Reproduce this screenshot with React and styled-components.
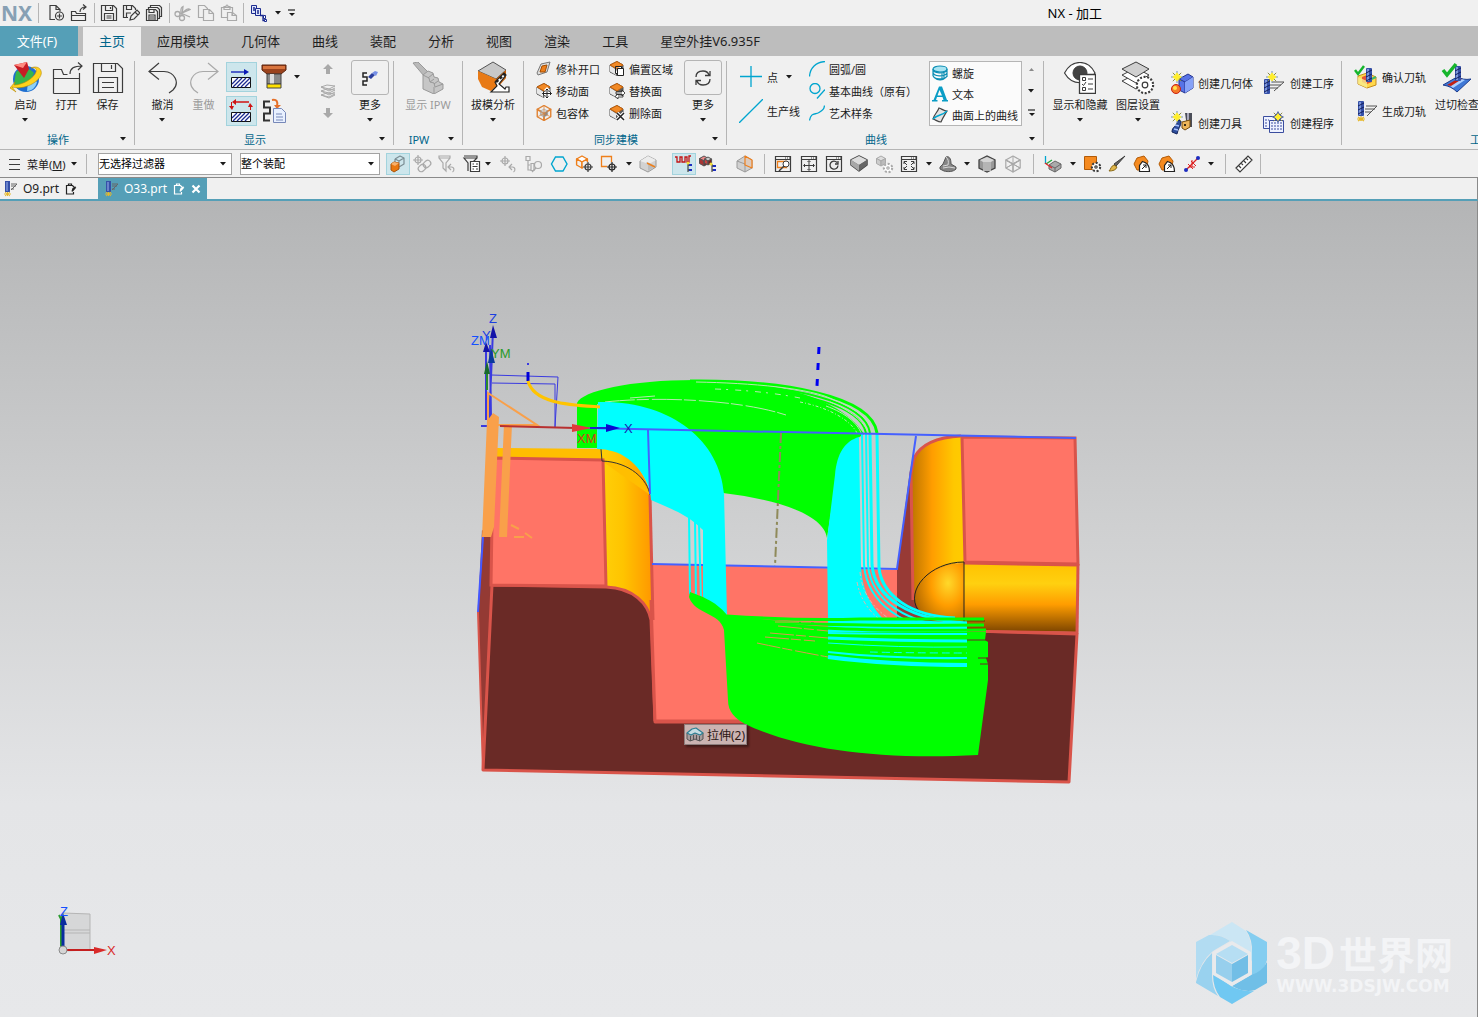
import { useState } from "react";
import styled, { createGlobalStyle } from "styled-components";

const DARK = "#3c3c3c";
const GREY = "#a9a9a9";
const BLUE = "#00a5cf";
const ORANGE = "#ee7f1b";

function Cube({ x, y, s, top, left, right, line = DARK, width = 1 }) {
    const w = s * 0.9;
    const h = s / 2;
    return (
        <g stroke={line} strokeWidth={width} strokeLinejoin="round">
            <path d={`M${x} ${y - s}l${w} ${h}l${-w} ${h}l${-w} ${-h}z`} fill={top} />
            <path d={`M${x - w} ${y - h}l${w} ${h}v${s}l${-w} ${-h}z`} fill={left} />
            <path d={`M${x + w} ${y - h}l${-w} ${h}v${s}l${w} ${-h}z`} fill={right} />
        </g>
    );
}

function Gear({ x, y, r = 4, color = DARK }) {
    return (
        <g stroke={color} fill="#fff">
            <circle cx={x} cy={y} r={r + 1} strokeDasharray="2 1.6" strokeWidth="2.4" />
            <circle cx={x} cy={y} r={r} stroke="none" />
            <circle cx={x} cy={y} r={r * 0.4} strokeWidth="1.2" />
        </g>
    );
}

function Star({ x, y, s = 6 }) {
    return (
        <g>
            <path d={`M${x - s} ${y}h${s * 2}M${x} ${y - s}v${s * 2}`} stroke="#6c8fc4" strokeWidth="1" />
            <path d={`M${x - s * 0.7} ${y - s * 0.7}L${x + s * 0.7} ${y + s * 0.7}M${x + s * 0.7} ${y - s * 0.7}L${x - s * 0.7} ${y + s * 0.7}`} stroke="#8a8a40" strokeWidth="1" />
            <path d={`M${x} ${y - s * 0.8}L${x + 2} ${y - 2}L${x + s * 0.8} ${y}L${x + 2} ${y + 2}L${x} ${y + s * 0.8}L${x - 2} ${y + 2}L${x - s * 0.8} ${y}L${x - 2} ${y - 2}z`} fill="#ffee2e" />
        </g>
    );
}

function Mill({ x, y, h = 15 }) {
    return (
        <g>
            <rect x={x} y={y} width="6" height={h} rx="1" fill="#3550a8" />
            <path d={`M${x + 2} ${y + 1}v${h - 2}`} stroke="#9db4ee" strokeWidth="1.4" />
            <path d={`M${x} ${y + 5}l6 -3M${x} ${y + 9}l6 -3M${x} ${y + 13}l6 -3`} stroke="#141f5c" />
        </g>
    );
}

function Target({ x, y, color = DARK, halo = "none" }) {
    const d = `M${x - 5} ${y}h10M${x} ${y - 5}v10`;
    return (
        <g fill="none">
            <path d={d} stroke={halo} strokeWidth="3" />
            <path d={d} stroke={color} strokeWidth="1.2" />
            <circle cx={x} cy={y} r="3" stroke={color} strokeWidth="1.2" />
        </g>
    );
}

const orangeCube = (
    <g strokeLinejoin="round">
        <path d="M1 4L8 .500l6 3.500v6L8 14.500 1 11z" fill="#5c5c5c" stroke="#555" />
        <path d="M1 4.500l6 4V14l-6-3.500z" fill="#e8e8e8" />
        <path d="M1 4L8 .500l6 3.500-6 4z" fill="#f28a26" stroke="#c2610c" />
    </g>
);
const frame = <path d="M4.500 4.500h15v15h-15zM4.500 7.500h15M14 6h1M16 6h1M18 6h1" stroke={DARK} fill="none" strokeWidth="1.2" />;

// every drawing is [width, height, shapes]
const drawings = {
    newFile: [18, 18, <g fill="none" stroke={DARK} strokeWidth="1.2"><path d="M7 15.500H2V1.500h6l4 4v2M8 1.500v4h4" /><circle cx="11.500" cy="12" r="4" /><path d="M9 12h5M11.500 9.500v5" /></g>],
    openFile: [18, 18, <g fill="none" stroke={DARK} strokeWidth="1.2"><path d="M1.500 16.500v-9h4l1 2h9v7zM1.500 11.500h14M10 8c0-4 2-5 6-5M13 .500l3 2.500-3 2.500" /></g>],
    save: [18, 18, <g fill="none" stroke={DARK} strokeWidth="1.200"><path d="M1.500 1.500h12l3 3v12h-15zM5.500 1.500v5h7v-5M10.500 3v2M4.500 16v-6.500h9V16M6.500 12h5M6.500 14h5" /></g>],
    saveEdit: [18, 18, <g fill="none" stroke={DARK} strokeWidth="1.200"><path d="M6 13.500H1.500v-12h9l3 3V6M4.500 1.500v4h5v-4M4.500 13V9H9" /><path d="M8 16l1-4 6-6 3 3-6 6zM13 8l3 3" fill="#f0f0f0" /></g>],
    saveAll: [18, 18, <g fill="none" stroke={DARK} strokeWidth="1.200"><path d="M1.500 5.500h9l2 2v9h-11zM4 5.500v3h5v-3M4 16v-5h6v5M5 13h4M5 15h4M3.500 5.500v-2h9l2 2v9h-2M5.500 3.500v-2h9l2 2v9h-2" /></g>],
    cut: [18, 18, <g fill="none" stroke={GREY} strokeWidth="1.300"><circle cx="3.500" cy="10" r="2.500" /><circle cx="8" cy="14" r="2.500" /><path d="M6 10l10-4.500c-2-2-5 1-8 4M8 11.500l1-9c-3 1-2 4-2 8M9 10l7 3" /></g>],
    copy: [18, 18, <g fill="#f0f0f0" stroke={GREY} strokeWidth="1.200"><path d="M1.500 1.500h6l3 3v9h-9z" /><path d="M6.500 5.500h6l4 4v7h-10zM12 5.500v4h4" /></g>],
    paste: [18, 18, <g fill="#f0f0f0" stroke={GREY} strokeWidth="1.200"><path d="M1.500 3.500h11v10h-11zM4 5.500v-3h2c0-2 2-2 2 0h2v3z" /><path d="M7.500 8.500h5l4 3v5h-9zM12 8.500v3h4" /></g>],
    routing: [18, 18, <g stroke="#1b2a90" fill="#dfe6fa"><path d="M1.500 1.500h5v8h-5z" /><path d="M5.500 4.500h5v7h-5z" /><path d="M3 4h2M3 6h2M7 7h2M7 9h2M10 11.500h3v5h2M13 13h2" fill="none" strokeWidth="1.300" /><path d="M13.500 11.500h2v3h-2zM14.500 15.500h2v2h-2z" fill="#fff" /></g>],

    start: [32, 32, <g><circle cx="16" cy="17" r="13" fill="#1f6fd0" /><path d="M6 10c6-5 14-4 18 1l-4 9c-4 2-6-2-8 3s-6 3-8-1z" fill="#39b54a" /><path d="M18 20c4-2 7-2 9 0-1 5-5 9-10 9z" fill="#8ed0f5" /><path d="M2 25c14 4 32-8 29-16-1-4-6-5-10-3 5-1 6 1 5 4-2 6-13 13-22 13l1-3-5 6 6 4z" fill="#ffd21c" stroke="#b98a00" strokeWidth=".600" /><path d="M4 3l13-3 2 7-5 9z" fill="#c81d25" /><path d="M4 3l13-3-4 6z" fill="#ff8a80" /></g>],
    open: [32, 32, <g fill="none" stroke={DARK} strokeWidth="1.200"><path d="M2.500 31.500v-24h8l2 5h4M28.500 11v20.500h-26M2.500 16.500h26" /><path d="M19 12c0-6 4-8 12-8M27 .500l4 3.500-4 4" /></g>],
    saveBig: [32, 32, <g fill="none" stroke={DARK} strokeWidth="1.200"><path d="M1.500 1.500h24l5 5v24h-29zM9.500 1.500v8h14v-8M19.500 3v4M6.500 30V15.500h19V30M10 20.500h12M10 25.500h12" /></g>],
    undo: [32, 32, <path d="M12 1L2 9.500l10 8M2.500 9.500H17C28 10 33 21 26 28l-4 3" fill="none" stroke={DARK} strokeWidth="1.200" />],
    redo: [32, 32, <path d="M20 1l10 8.500-10 8M29.500 9.500H15C4 10 -1 21 6 28l4 3" fill="none" stroke={GREY} strokeWidth="1.200" />],
    hatch: [24, 24, <g><path d="M2 7h15" stroke="#0a18b5" strokeWidth="1.300" /><path d="M15 4l5 3-5 3z" fill="#0a18b5" /><path d="M2.500 12.500h19v10h-19z" fill="#fff" stroke="#111" /><path d="M3 19l6-6M4 22l9-9M8 22l9-9M12 22l9-9M16 22l5-5" stroke="#1b2a90" strokeWidth="1.300" /></g>],
    hatchLoop: [24, 24, <g><path d="M6 3h14" stroke="#cf1313" strokeWidth="1.500" /><path d="M7 0L3 3l4 3zM0 7h5l-2 4zM19 8h5l-3-4z" fill="#cf1313" /><path d="M2.500 3v5M21.500 6v5" stroke="#cf1313" /><path d="M2.500 13.500h19v9h-19z" fill="#fff" stroke="#111" /><path d="M3 19l5-5M4 22l8-8M8 22l8-8M12 22l8-8M16 22l5-5" stroke="#1b2a90" strokeWidth="1.300" /></g>],
    toolHolder: [26, 26, <g><path d="M1 1h24v5l-5 4H6L1 6z" fill="#9b431d" stroke="#5a230c" /><path d="M2 2h22v3H2z" fill="#d8743e" /><path d="M6 10h14v10H6z" fill="#8a8a8a" stroke="#444" /><path d="M9 10h4v10H9z" fill="#ddd" /><path d="M6 20h14v4H6z" fill="#ffe100" stroke="#444" /></g>],
    pathDoc: [26, 26, <g fill="none"><path d="M9 3.500H3v6h6v6H3v7h6" stroke="#333" strokeWidth="2" /><path d="M11 2c5-1 6 2 5 6" stroke="#e5702a" strokeWidth="2" /><path d="M13 7h7l-4 4z" fill="#e5702a" /><path d="M12.500 10.500h8l4 4v10h-12z" fill="#e8f0ff" stroke="#7788b8" /><path d="M15 16h6M15 19h7M15 22h7" stroke="#7788b8" /></g>],
    upArrow: [14, 12, <path d="M7 1l5 5H9v5H5V6H2z" fill={GREY} />],
    downArrow: [14, 12, <path d="M7 11l5-5H9V1H5v5H2z" fill={GREY} />],
    layersGrey: [16, 16, <g fill="none" stroke={GREY} strokeLinejoin="round"><path d="M1 4l6-2 8 1-6 3zM1 8l6-2 8 1-6 3zM1 12l6-2 8 1-6 3zM1 4l8 4 6-3M1 8l8 4 6-3M1 12l8 3 6-3" /></g>],
    torch: [18, 18, <g fill="none"><path d="M6 4H2v4h4v4H2v4h4" stroke="#222" strokeWidth="1.500" /><path d="M7 8l4-4 3 2-4 4z" fill="#2c3f9e" /><path d="M11 4l3-2 3 1-2 4z" fill="#7690e6" /></g>],
    ipw: [32, 32, <g fill="#b9b9b9" stroke="#999"><path d="M1 1l5-1 10 10-4 4z" /><path d="M11 13l5-4 5 2 1 4 4 1 1 4 4 2v5l-9 5-11-5z" fill="#c6c6c6" /><path d="M11 13l6 3 1 4 4 1 1 4 8-3M22 32v-7M16 16l5-4M18 20l4-3M22 22l4-3" fill="none" /></g>],
    draft: [34, 34, <g><path d="M2 10l15-9 13 8-10 9z" fill="#c8c8c8" stroke="#555" /><path d="M2 10l18 8 2 6-7 6-9-4-4-8z" fill="#e87a16" /><path d="M30 9l-10 9 2 8 8-9z" fill="#c96008" /><path d="M15 31h18v-5h-3l-1 2-6-5 7-9-2-2-9 9 2 4z" fill="#fff" stroke="#222" strokeWidth="1.200" /><path d="M20 21l9-8" stroke="#222" strokeWidth="2.500" strokeDasharray="3 2" /></g>],
    patch: [16, 16, <g><path d="M1 12L5 3l9-2-3 10-9 3z" fill="#ddd" stroke="#777" /><path d="M4 11l2-6 5-1-2 7z" fill={ORANGE} stroke="#a34d00" /></g>],
    moveFace: [16, 16, <g>{orangeCube}<path d="M6.500 10.500h9M11 6v9M9 8l2-2 2 2M9 13l2 2 2-2" stroke="#fff" strokeWidth="3" fill="none" /><path d="M6.500 10.500h9M11 6v9M9.500 7.500L11 6l1.500 1.500M9.500 13.500L11 15l1.500-1.500M8 9l-1.500 1.500L8 12M14 9l1.500 1.500L14 12" stroke="#222" fill="none" /></g>],
    wrap: [16, 16, <g><Cube x={8} y={8} s={7.500} top="none" left="none" right="none" line="#e08334" width={1.400} /><Cube x={8} y={8} s={4} top="#ddd" left="#bbb" right="#888" line="#999" width={0.600} /><path d="M8 1v14M1 5l14 7M15 5L1 12" stroke="#e08334" strokeWidth=".700" /></g>],
    offset: [16, 16, <g>{orangeCube}<path d="M8.500 7.500h6v7h-6zM6.500 5.500h6v2M6.500 5.500v7h2" fill="#fff" stroke="#222" /></g>],
    replace: [16, 16, <g>{orangeCube}<path d="M7 9h6V7l3 3-3 3v-2H7zM14 12H9v-1l-3 2.500L9 16v-2h5z" fill="#fff" stroke="#222" strokeWidth=".800" /></g>],
    remove: [16, 16, <g>{orangeCube}<path d="M8 8l7 7M15 8l-7 7" stroke="#fff" strokeWidth="3.500" /><path d="M8 8l7 7M15 8l-7 7" stroke="#222" strokeWidth="1.500" /></g>],
    refresh: [20, 20, <g fill="none" stroke={DARK} strokeWidth="1.300"><path d="M3 9c0-4 3-6 7-6 3 0 5 1 6 4M17 11c0 4-3 6-7 6-3 0-5-1-6-4M17 3v4.500h-5M3 17v-4.500h5" /></g>],

    point: [24, 24, <path d="M1 11.500h22M12 1v21" stroke={BLUE} strokeWidth="1.300" />],
    line: [24, 24, <path d="M0 24L24 0" stroke={BLUE} strokeWidth="1.300" />],
    arc: [16, 16, <path d="M.500 15.500C1 7 7 1 16 .500" fill="none" stroke={BLUE} strokeWidth="1.300" />],
    basic: [16, 16, <g fill="none" stroke={BLUE} strokeWidth="1.300"><circle cx="6" cy="5.500" r="5" /><path d="M8 15.500l8-9" /></g>],
    spline: [16, 16, <path d="M.500 15.500C2 7 6 10 10 7.500S15 4 15.500.500" fill="none" stroke={BLUE} strokeWidth="1.300" />],
    helix: [16, 16, <g fill="none" stroke="#0d8fb5" strokeWidth="1.200"><ellipse cx="8" cy="4" rx="7" ry="3" fill="#a8e4f2" /><path d="M1 4c0 5 12 5 14 1M1 7c0 5 12 5 14 1M1 10c0 5 12 5 14 1M3 13c3 3 8 2 10 0M1 4v7M15 4v8M10 8v6M12 8v6" /></g>],
    textA: [16, 16, <g fill="#0a9dc6"><path d="M7 .500h3l5 13.500h1v1.500h-6V14h1.500l-1-3H5l-1 3h1.500v1.500H0V14h1.500zM5.500 9.500H10L7.500 4z" /></g>],
    surfCurve: [16, 16, <g><path d="M1 12c2-6 4-6 6-11 3 1 5 3 8 3-2 4-4 6-6 11-3 0-5-2-8-3z" fill="#e4e4e4" stroke="#444" strokeWidth="1.200" /><path d="M1 12C6 7 10 9 15 4" stroke={BLUE} fill="none" strokeWidth="1.400" /></g>],
    showHide: [32, 32, <g fill="none" stroke={DARK}><path d="M.500 11C8-3 24-3 31 11 24 24 8 24 .500 11z" strokeWidth="1.200" fill="#fff" /><circle cx="16" cy="11" r="7" fill="#444" /><path d="M15.500 12.500h16v19h-16z" fill="#fff" strokeWidth="1.300" /><path d="M18.500 15.500h3v3h-3zM18.500 25.500h3v3h-3zM24 17h5M24 22h5M24 27h5M18 22l1.500 1.500L22 20" /></g>],
    layerSet: [34, 34, <g stroke={DARK}><path d="M1 20l14 8 13-8-13-7z" fill="#fff" /><path d="M1 14l14 8 13-8-13-7z" fill="#fff" /><path d="M1 8l14 8 13-8L15 1z" fill="#d0d0d0" /><Gear x={24} y={24} r={7} /></g>],
    newGeom: [24, 24, <g><path d="M9 8l9-5 5 3v11l-8 5-6-3z" fill="#5873e6" stroke="#25348f" /><path d="M9 8l6 3v11M15 11l8-5" stroke="#25348f" fill="none" /><path d="M15 11l8-5v11l-8 5z" fill="#87a2f7" /><circle cx="6" cy="18" r="4.500" fill="#f47b2a" stroke="#cc1f10" /><circle cx="5" cy="17" r="2" fill="#ffe34d" /><Star x={7} y={6} /></g>],
    newTool: [24, 24, <g><path d="M2 21c0-6 5-5 6-12l3 1c0 6-3 7-4 13z" fill="#2d4d9c" stroke="#14255c" /><path d="M4 18l4 1M5 14l4 1" stroke="#a9c2ff" strokeWidth="1.500" /><path d="M15 2h7v14h-5z" fill="#4a4d58" /><path d="M17 2h2v12h-2z" fill="#aab" /><path d="M12 11l8-2v7l-5 3-3-2z" fill="#edb65a" stroke="#704a10" /><circle cx="15" cy="14" r="1" /><Star x={7} y={6} /></g>],
    newOp: [24, 24, <g><Mill x={2} y={8} /><path d="M10 11h12M8 14h11M8 17h8M22 11l-10 9" stroke="#555" /><Star x={10} y={6} /></g>],
    newProg: [24, 24, <g fill="#eef2ff" stroke="#3a4d9e"><path d="M1.500 5.500h12v12h-12z" /><path d="M7.500 9.500h14v12h-14z" /><path d="M9 12h11M9 15h11M9 18h11M3 9h4M3 12h3M3 15h3" strokeDasharray="2 1" /><Star x={16} y={6} /></g>],
    verify: [24, 24, <g><path d="M4 11l9-3 9 4v8l-9 3-9-4z" fill="#ffd84a" stroke="#c68b1a" /><path d="M8 12l5-2 5 2v5l-5 2-5-2z" fill="#e65437" /><path d="M4 12l9 4v7l-9-4z" fill="#f7ee8e" opacity=".800" /><path d="M13 16l9-4" stroke="#42b96b" strokeWidth="2" /><Mill x={12} y={3} h={14} /><path d="M1 5l3 4 6-8" stroke="#16b52c" strokeWidth="2.500" fill="none" /></g>],
    generate: [24, 24, <g><Mill x={4} y={2} /><path d="M12 7h11M11 10h10M11 13h6M23 7L13 17" stroke="#555" /><path d="M3 20h8M7 17v5M4 18l6 4M10 18l-6 4" stroke="#e6b82a" strokeWidth="1.200" /></g>],
    gouge: [32, 32, <g><path d="M2 23l14-8c5 2 8 3 14 2L16 30C12 26 8 24 2 23z" fill="#3f78d6" stroke="#1d3d8f" /><path d="M8 23l12-6 4 1-12 8z" fill="#a9cfff" /><path d="M6 23l12-7 3 1-11 7z" fill="#c22012" /><Mill x={14} y={4} h={15} /><path d="M2 8l4 5 9-11" stroke="#16b52c" strokeWidth="3.500" fill="none" /></g>],

    selBody: [24, 24, <g strokeLinejoin="round"><path d="M9 7l5-3 4 2v6l-5 3M9 7v3M9 7l4 2 5-3M13 9v2" stroke="#7b8d94" fill="none" strokeWidth="1.200" /><path d="M5 12l3-2 5 1v6l-5 3-3-2z" fill="#e9780f" stroke="#a8530a" /><path d="M5 12l3-2 5 1-4 3z" fill="#f7b06a" /></g>],
    chain: [24, 24, <g stroke={GREY} fill="none" strokeWidth="1.200"><Target x={8} y={8} color={GREY} /><rect x="8" y="13" width="8" height="6" rx="3" transform="rotate(-40 12 16)" /><rect x="13" y="9" width="8" height="6" rx="3" transform="rotate(-40 17 12)" /></g>],
    filterUndo: [24, 24, <g stroke={GREY} fill="none" strokeWidth="1.200"><path d="M4 4h11v2l-4 5v8l-3-3v-5L4 6zM4 6h11M16 12l-3 3 3 3M13.500 15h3c3 0 3 4 1 5" /></g>],
    filterList: [24, 24, <g stroke={DARK} fill="none" strokeWidth="1.200"><path d="M4 4h13v2l-4 4M8 19v-8L4 6h13" /><path d="M10.500 9.500h9v10h-9z" fill="#fff" /><path d="M12.500 12h1.500M12.500 17h1.500M16 12h2M16 17h2M12.500 14.500h5" /></g>],
    targetUndo: [24, 24, <g stroke={GREY} fill="none" strokeWidth="1.200"><Target x={9} y={9} color={GREY} /><path d="M16 12l-3 3 3 3M13.500 15h3c3 0 3 4 1 5" /></g>],
    treeFind: [24, 24, <g stroke={GREY} fill="none" strokeWidth="1.200"><path d="M5 4.500h4v4H5zM7 9v9h3M7 13h2M10 11.500h3v7h-3z" /><circle cx="17" cy="13" r="3.500" /><path d="M15 16l-4 4" /></g>],
    hexagon: [24, 24, <path d="M8.500 5h7.500l4 7-4 7H8.500l-4-7z" fill="none" stroke={BLUE} strokeWidth="1.400" />],
    cubeTarget: [24, 24, <g><Cube x={10} y={10} s={6} top="#fff" left="#f0f0f0" right="#f0f0f0" line={ORANGE} width={1.400} /><Target x={16} y={15} halo="#f0f0f0" /></g>],
    boxTarget: [24, 24, <g><path d="M4.500 4.500h10v10h-10z" fill="none" stroke={ORANGE} strokeWidth="1.300" /><Target x={15} y={15} halo="#f0f0f0" color="#222" /></g>],
    greySplit: [24, 24, <g strokeLinejoin="round"><path d="M4 9l8-5 8 4v7l-8 5-8-4z" fill="#d2d2d2" stroke="#9a9a9a" /><path d="M4 9l8-5 8 4-7 4z" fill="#ececec" /><path d="M10 10l10 4-8 5v-6z" fill="#bdbdbd" /><path d="M11 11l8 4" stroke={ORANGE} strokeWidth="1.500" /></g>],
    toolPath: [24, 24, <g fill="none"><path d="M3 5h2v5h3V5h2v5h3V5h2v5h2V4h2" stroke="#c21414" strokeWidth="1.300" /><path d="M16 11v9M16 13h3M16 18h3" stroke="#222" /><path d="M17 12h3v2h-3zM17 17h3v2h-3z" fill="#1c2cc0" /><circle cx="16" cy="11" r="1.500" fill="#f3df35" /></g>],
    toolCubes: [24, 24, <g><Cube x={8} y={9} s={5} top="#e88" left="#a33" right="#722" line="#555" /><Cube x={12} y={9} s={4} top="#ccc" left="#c44" right="#722" line="#555" /><path d="M16 12v8M16 14h3M16 18h3" stroke="#222" /><path d="M17 13h3v2h-3zM17 17h3v2h-3z" fill="#1c2cc0" /><circle cx="15" cy="12" r="1.500" fill="#f3df35" /></g>],
    cubeSection: [24, 24, <g strokeLinejoin="round"><path d="M4 9l8-5 7 4v8l-7 4-8-4z" fill="#d0d0d0" stroke="#9a9a9a" /><path d="M4 9l8 3v8M12 12l7-4" stroke="#9a9a9a" fill="none" /><path d="M12 4l7 4v8l-7-3z" fill="#dccabd" stroke={ORANGE} strokeWidth="1.200" /></g>],
    viewFind: [24, 24, <g>{frame}<path d="M6.500 9.500h9v6h-9z" stroke={ORANGE} fill="none" strokeWidth="1.300" /><circle cx="15" cy="12" r="3" fill="#fff" stroke={DARK} /><path d="M13 14l-5 5" stroke={DARK} strokeWidth="1.500" /></g>],
    viewPan: [24, 24, <g>{frame}<path d="M7 13.500h10M12 9v9M10.500 10L12 8.500l1.500 1.500M10.500 17l1.500 1.500 1.500-1.500M8 12l-1.500 1.500L8 15M16 12l1.500 1.500L16 15" stroke={DARK} fill="none" /></g>],
    viewRotate: [24, 24, <g>{frame}<path d="M15 10.500a4 4 0 1 0 1 3M16 9v3h-3" stroke={DARK} fill="none" strokeWidth="1.300" /></g>],
    shaded: [24, 24, <g strokeLinejoin="round"><path d="M4 8l8-4 8 4v5l-8 6-8-6z" stroke="#444" strokeWidth="1.500" fill="#666" /><path d="M4 8l8-4 8 4-8 5z" fill="#dcdcdc" /><path d="M4 8v5l8 6v-6z" fill="#a8a8a8" /><path d="M20 8v5l-8 6v-6z" fill="#666" /></g>],
    shadedGear: [24, 24, <g><Cube x={9} y={9} s={5} top="#ddd" left="#ccc" right="#bbb" line={GREY} /><Gear x={16} y={16} r={3} color={GREY} /></g>],
    viewFit: [24, 24, <g>{frame}<path d="M7 12V9.500h3M14 9.500h3V12M17 15v2.500h-3M10 17.500H7V15M7 10l3 3M17 10l-3 3M7 17l3-3M17 17l-3-3" stroke={DARK} fill="none" /></g>],
    bracket: [24, 24, <g strokeLinejoin="round"><path d="M4 15l3-3 3-7c3-1 5 1 5 7l5 3v2c-3 3-8 3-12 2l-4-2z" fill="#858585" stroke="#555" /><path d="M10 5c2 2 3 4 2 8l-5 1" fill="none" stroke="#d8d8d8" /><path d="M7 16l6-1 6 1" fill="none" stroke="#d8d8d8" /></g>],
    solid: [24, 24, <g><path d="M4 8l8-4 8 4v8l-8 4-8-4z" fill="#999" stroke="#444" strokeWidth="1.300" /><path d="M5 8l7-3 7 3-3 2H8z" fill="#d6d6d6" /><path d="M8 10h8v9H8z" fill="#b5b5b5" /></g>],
    wire: [24, 24, <g><Cube x={12} y={12} s={8} top="none" left="none" right="none" line={GREY} width={1.200} /><path d="M5 16l7-4 7 4M12 4v8M5 8l14 8M19 8L5 16" stroke={GREY} fill="none" /></g>],
    wcs: [24, 24, <g><path d="M8 13l6-4 6 3v4l-6 4-6-3z" fill="#aaa" stroke="#666" /><path d="M8 13l6 3 6-4M14 16v4" stroke="#666" fill="none" /><path d="M4.500 4v8" stroke={BLUE} strokeWidth="1.300" /><path d="M5 12l6-4" stroke="#23a83a" strokeWidth="1.300" /><path d="M4 11l7 5" stroke="#e0282e" strokeWidth="1.300" /></g>],
    faceGear: [24, 24, <g><path d="M4.500 4.500h12v13h-12z" fill="#f58a1f" stroke="#b35a05" /><Gear x={16} y={15} r={3} /></g>],
    brush: [24, 24, <g><path d="M20 4L11 14l-2-2z" fill="#666" stroke={DARK} /><path d="M9 13l3 2c-1 3-4 4-8 4 2-2 2-5 5-6z" fill="#e0b64a" stroke="#8a6a1a" /></g>],
    faceArrow: [24, 24, <g><path d="M4 12l3-6 7-2 4 5-2 9H7z" fill="#f58a1f" stroke="#b35a05" /><path d="M9.500 19.500h10c0-6-3-9-7-10l-3 4z" fill="#fff" stroke="#222" strokeWidth="1.200" /><path d="M12 17l4-4M13 13h3v3" stroke="#222" fill="none" /></g>],
    measureDots: [24, 24, <g><path d="M6 18L18 6" stroke="#d22" strokeWidth="1.300" /><path d="M8 12l5 5M11 9l5 5M9 15h6M12 8v7" stroke="#d22" /><circle cx="6" cy="18" r="2" fill="#1c2cc0" /><circle cx="18" cy="6" r="2" fill="#1c2cc0" /></g>],
    ruler: [24, 24, <g fill="#fff" stroke={DARK} strokeWidth="1.200"><path d="M4 16L16 4l4 4L8 20zM7 14l2 2M9 11l2 2M12 9l2 2M14 6l2 2" /></g>],
    millTab: [16, 16, <g><rect x="4" y="0" width="5" height="11" fill="#3550a8" /><path d="M6 1v9" stroke="#9db4ee" /><path d="M10 3h6M10 5h5M10 8h3M16 3l-6 6" stroke="#666" /><path d="M3 13h7M6.500 11v4M4 11l5 4M9 11l-5 4" stroke="#e6b82a" /></g>],
    edited: [12, 12, <g fill="none" stroke="currentColor" strokeWidth="1.200"><path d="M8.500 9v2H1.500V2.500h6l2 2M3.500 3V1h3v2M10.500 4.500L7.500 8M7 8.500l1-3 3-1.500" /></g>],
    close: [10, 10, <path d="M1.500 1.500l7 7M8.500 1.500l-7 7" stroke="currentColor" strokeWidth="2.200" />],
    burger: [14, 14, <path d="M1 2.500h11M1 7.500h11M1 12.500h11" stroke={DARK} />],
    extrude: [18, 16, <g strokeLinejoin="round"><path d="M1 6v6l3 2 3-1 2-1 2 1 3 1 3-2V6z" fill="#a79c9c" stroke="#555" /><path d="M1 6l5-4 4-1 7 5-3 2-5-2-4 2z" fill="#c5dde2" stroke="#2c7f93" strokeWidth="1.200" /><path d="M4.500 9v5M13.500 9v5M7.500 8v5M10.500 8v5" stroke="#555" /></g>]
};

function Icon({ name }) {
    const [w, h, shapes] = drawings[name];
    return <Glyph width={w} height={h} viewBox={`0 0 ${w} ${h}`} aria-hidden="true">{shapes}</Glyph>;
}

function Caret({ bar, dim }) {
    return (
        <Glyph width="7" height={bar ? 8 : 4} viewBox={bar ? "0 0 7 8" : "0 0 7 4"} aria-hidden="true">
            {bar && <path d="M0 1h7" stroke="#222" strokeWidth="1.200" />}
            <path d={dim ? "M1 4h5L3.500 1z" : bar ? "M1 4h6L4 7z" : "M0 0h6L3 3.500z"} fill={dim ? "#8a8a8a" : "#1a1a1a"} />
        </Glyph>
    );
}

function BigButton({ icon, label, width = 41, caret, disabled }) {
    return (
        <BigBox $width={width} disabled={disabled}>
            <BigArt><Icon name={icon} /></BigArt>
            <span>{label}</span>
            {caret && <Caret />}
        </BigBox>
    );
}

function MoreButton({ icon }) {
    return (
        <BigBox $width={38}>
            <MoreArt><Icon name={icon} /></MoreArt>
            <span>更多</span>
            <Caret />
        </BigBox>
    );
}

function Small({ icon, label, slot = 16, caret }) {
    return (
        <SmallBox>
            <Slot $width={slot}><Icon name={icon} /></Slot>
            {label}
            {caret && <CaretGap><Caret /></CaretGap>}
        </SmallBox>
    );
}

function Group({ width, label, pad = 0, children }) {
    return (
        <>
            <GroupBox $width={width}>
                <GroupBody $pad={pad}>{children}</GroupBody>
                {label && (
                    <GroupFoot>
                        <GroupName>{label}</GroupName>
                        <Caret />
                    </GroupFoot>
                )}
            </GroupBox>
            <Divider />
        </>
    );
}

const quickItems = [
    ["newFile", 22], ["openFile", 22], ["|", 8], ["save", 22], ["saveEdit", 22], ["saveAll", 24], ["|", 6],
    ["cut", 22], ["copy", 24], ["paste", 22], ["|", 6], ["routing", 26], ["v", 12], ["_v", 14]
];

const toolItems = [
    ["selBody", 24, true], ["chain", 24], ["filterUndo", 26], ["filterList", 24], ["v", 8], [" ", 4],
    ["targetUndo", 24], ["treeFind", 26], ["hexagon", 26], ["cubeTarget", 24], ["boxTarget", 26], ["v", 14],
    ["greySplit", 24], [" ", 12], ["toolPath", 24, true], ["toolCubes", 24], [" ", 12], ["cubeSection", 26], ["|", 12],
    ["viewFind", 26], ["viewPan", 26], ["viewRotate", 24], ["shaded", 26], ["shadedGear", 24], ["viewFit", 26], ["v", 14],
    ["bracket", 24], ["v", 14], ["solid", 26], ["wire", 26], ["|", 14], ["wcs", 26], ["v", 14],
    ["faceGear", 24], ["brush", 26], ["faceArrow", 24], ["faceArrow", 26], ["measureDots", 24], ["v", 14],
    ["|", 14], ["ruler", 24], ["|", 8]
];

function Tools({ items }) {
    return items.map(([name, width, on], i) => {
        if (name === "|") return <Cell key={i} $width={width}><Rule /></Cell>;
        if (name === " ") return <Cell key={i} $width={width} />;
        return (
            <ToolButton key={i} $width={width} $on={on} aria-label={name}>
                {name === "v" ? <Caret /> : name === "_v" ? <Caret bar /> : <Icon name={name} />}
            </ToolButton>
        );
    });
}

const tabs = ["主页", "应用模块", "几何体", "曲线", "装配", "分析", "视图", "渲染", "工具", "星空外挂V6.935F"];

function Model() {
    return (
        <Scene viewBox="0 201 1477 816" preserveAspectRatio="xMidYMid meet">
            <defs>
                <linearGradient id="filletL"><stop offset="0" stopColor="#ffcf08" /><stop offset=".400" stopColor="#ffc400" /><stop offset="1" stopColor="#ff9600" /></linearGradient>
                <linearGradient id="filletR"><stop offset="0" stopColor="#b87200" /><stop offset=".400" stopColor="#ff9d00" /><stop offset=".800" stopColor="#ffc800" /><stop offset="1" stopColor="#ffcc00" /></linearGradient>
                <linearGradient id="filletF" x2="0" y2="1"><stop offset="0" stopColor="#ffc200" /><stop offset=".300" stopColor="#ffd010" /><stop offset=".600" stopColor="#ff9d00" /><stop offset="1" stopColor="#7d4500" /></linearGradient>
                <radialGradient id="corner" cx=".680" cy=".300" r=".750"><stop offset="0" stopColor="#ffd92a" /><stop offset=".450" stopColor="#ff9d00" /><stop offset="1" stopColor="#a86200" /></radialGradient>
            </defs>

            {/* block */}
            <path d="M652 564L898 570L960 640L760 724H655z" fill="#ff7466" />
            <path d="M482 530L492 537V586L483 770L478 612z" fill="#943a34" />
            <path d="M603 460C635 463 650 480 650 500L653 625L606 590z" fill="url(#filletL)" />
            <path d="M492 585L606 587C634 588 648 604 651 620L655 722H745L976 640V631L1077 634L1069 782L483 770z" fill="#6a2a26" stroke="#d9544a" strokeWidth="3" strokeLinejoin="round" />
            <path d="M655 720L652 600L900 600L960 645L800 722z" fill="#ff7466" />
            <path d="M655 721H742M655 721L651 600" stroke="#d9544a" strokeWidth="3" />
            <path d="M483 770L478 612" stroke="#d9544a" strokeWidth="2" />
            <path d="M483 537L478 612" stroke="#4458ff" strokeWidth="2" />
            <path d="M497 448L601 449C625 448 646 470 650 495L602 461L495 458z" fill="#ffbe00" />
            <path d="M601 449C625 448 646 470 650 495C640 470 625 462 602 461z" fill="url(#filletL)" />
            <path d="M493 458L603 460L606 586L491 585z" fill="#ff7466" stroke="#d9544a" strokeWidth="3" />
            <path d="M601 449L602 461C630 462 648 480 650 495" fill="none" stroke="#333" />
            <path d="M650 495L653 620" stroke="#d9544a" strokeWidth="3" />

            {/* right wall and fillets */}
            <path d="M910 470L897 570V620L990 632L913 480z" fill="#983a35" />
            <path d="M910 474L914 458C922 442 940 437 961 436L965 563C935 563 914 582 914 606z" fill="url(#filletR)" />
            <path d="M964 563L1077 565L1076 632L964 630z" fill="url(#filletF)" />
            <path d="M964 563C935 563 914 582 914 598C916 615 940 628 964 630z" fill="url(#corner)" />
            <path d="M911 474L914 458C922 442 940 437 961 436M911 474L913 600M964 563L1078 565M960 631L1077 633" fill="none" stroke="#d9544a" strokeWidth="3" />
            <path d="M962 437L1075 438L1078 564L965 562z" fill="#ff7466" stroke="#d9544a" strokeWidth="3" />
            <path d="M1078 564L1077 634" stroke="#d9544a" strokeWidth="3" />
            <path d="M918 610C905 590 930 562 964 562V630" fill="none" stroke="#222" />
            <path d="M652 564L897 569L911 470L916 436" fill="none" stroke="#4560ff" strokeWidth="2" />

            {/* tool path, far side */}
            <path d="M577 448V403C582 391 630 380 695 380C770 380 840 396 864 434L846 446L836 480L827 538C824 515 780 500 723 493L700 440L597 404V448z" fill="#0f0" />
            <g fill="none" stroke="#0f0" strokeWidth="2">
                <path d="M690 381C780 380 872 395 877 433" strokeWidth="3" />
                <path d="M720 385C790 386 865 400 870 433" />
                <path d="M740 390C800 391 860 405 866 433" />
            </g>
            <g fill="none" stroke="#b7e8b0" strokeWidth="1">
                <path d="M696 382C750 383 812 388 834 400C860 410 870 422 873 433" />
                <path d="M830 402C850 410 865 422 868 433" />
                <path d="M826 406C846 413 858 424 861 433" />
                <path d="M800 402C830 408 850 420 857 433" strokeDasharray="3 2 1 2" />
                <path d="M605 402C660 396 740 400 786 415" strokeDasharray="30 2 12 3" />
                <path d="M715 389C745 390 775 393 800 398" strokeDasharray="6 5 2 7" />
                <path d="M630 398L655 396" />
            </g>
            <path d="M598 402C670 400 720 440 724 494L727 615L703 597V530C688 515 670 508 651 500L650 490C640 462 620 449 597 449z" fill="#0ff" />
            <path d="M689 516L690 594M695 520L696 598M699 524L701 600" stroke="#0ff" strokeWidth="2" />
            <path d="M859 437C845 441 837 453 835 475L827 540L828 620H884C870 604 862 590 861 565z" fill="#0ff" />
            <g fill="none" stroke="#0ff">
                <path d="M877 434L879 568C882 595 910 616 955 618" strokeWidth="3" />
                <path d="M870 434L872 565C875 598 910 620 967 623" strokeWidth="3" />
                <path d="M866 434L868 565C871 600 905 625 967 629" strokeWidth="2" />
                <path d="M862 434L864 565C867 602 900 629 967 636" strokeWidth="2" />
            </g>
            <g fill="none" stroke="#d8b8b0" strokeDasharray="4 2 2 2">
                <path d="M860 572C862 594 874 608 888 618" />
                <path d="M857 582C860 598 868 610 878 618" />
            </g>

            {/* tool path, near side */}
            <path d="M690 592C700 596 715 600 727 615C745 617 765 619 785 623L850 632H986L985 640L988 642V657L986 658L988 664V680L978 755C880 760 800 750 745 724C735 718 728 712 728 700L724 630C720 612 695 615 689 597z" fill="#0f0" />
            <path d="M828 619H896L967 623V632H828z" fill="#0ff" />
            <path d="M967 621H985M967 628H986" stroke="#8a5200" strokeWidth="2" />
            <g fill="none" stroke="#0f0" strokeWidth="3">
                <path d="M727 616Q800 621 860 619L984 619" />
                <path d="M740 619Q820 627 984 625" />
                <path d="M770 623Q830 632 986 630" />
            </g>
            <g fill="none" stroke="#0ff">
                <path d="M828 633Q890 634 967 634" strokeWidth="2" />
                <path d="M828 638Q900 641 967 641" strokeWidth="3" />
                <path d="M828 643Q900 648 967 647" />
                <path d="M870 652Q910 653 967 653" strokeDasharray="8 4" />
                <path d="M828 652Q890 659 967 658" strokeWidth="2" />
                <path d="M828 657Q890 665 967 665" strokeWidth="4" />
            </g>
            <g fill="none" stroke="#d99a50">
                <path d="M775 622H828M778 626L828 631M770 633L828 638M757 643Q790 650 828 657M765 637L815 641" strokeDasharray="24 2 10 3" />
            </g>
            <path d="M967 640H987M978 658H987M980 664H988" stroke="#6a2a26" />

            {/* centre lines */}
            <path d="M781 433L775 566" stroke="#8f8a5a" strokeWidth="2" strokeDasharray="10 3 3 3" />
            <path d="M819 347L817 386" stroke="#0000f0" strokeWidth="3" strokeDasharray="7 9" />
            <path d="M586 428L1076 438" stroke="#4560ff" strokeWidth="2" />
            <path d="M648 430L650 494" stroke="#4560ff" strokeWidth="2" />

            {/* coordinate systems */}
            <g fill="none" stroke="#3a3ae0">
                <path d="M491 375L558 377L555 427M492 383L555 384V427" />
                <path d="M481 426H490" strokeWidth="2" />
                <path d="M528 363V365" strokeWidth="2" />
                <path d="M528 372V381" strokeWidth="3" stroke="#0000d8" />
                <path d="M493 330L489 425M486 345L486 420M490 345L491 420" strokeWidth="2" />
            </g>
            <path d="M528 381C534 404 572 405 600 407" fill="none" stroke="#ffc400" strokeWidth="3" />
            <path d="M493 325L497 338H490zM486 342L490 352H483z" fill="#1414a8" />
            <path d="M491 348L495 363H488z" fill="#0a3a9c" />
            <path d="M487 361L490 374H484z" fill="#186a2c" />
            <path d="M487 374V390" stroke="#2a8a2a" strokeWidth="2" />
            <g fill="none" stroke="#f9a04a" strokeWidth="2">
                <path d="M488 425V393L537 425H488" />
                <path d="M511 525L519 529M525 533L532 538M514 537H524" />
            </g>
            <path d="M487 421L493 413L499 417L494 527L491 537H482zM504 424H512L507 537H499z" fill="#f9a04a" />
            <path d="M500 426L576 428" stroke="#b83030" strokeWidth="2" />
            <path d="M572 424L592 428L572 432z" fill="#e03a3a" />
            <path d="M590 428H608" stroke="#2020d0" strokeWidth="2" />
            <path d="M606 424L620 428L606 432z" fill="#0a0ad0" />
            <AxisText x="489" y="323" fill="#1b3fe0">Z</AxisText>
            <AxisText x="482" y="340" fill="#1b3fe0">Y</AxisText>
            <AxisText x="471" y="345" fill="#1450ff">ZM</AxisText>
            <AxisText x="491" y="358" fill="#2a9a2a">YM</AxisText>
            <AxisText x="577" y="443" fill="#d83a1a">XM</AxisText>
            <AxisText x="624" y="433" fill="#1b1bb0">X</AxisText>
        </Scene>
    );
}

export default function App() {
    const [tab, setTab] = useState("主页");

    return (
        <Page>
            <GlobalStyle />
            <TitleBar>
                <Brand>NX</Brand>
                <Rule />
                <QuickAccess><Tools items={quickItems} /></QuickAccess>
                <WindowTitle>NX - 加工</WindowTitle>
            </TitleBar>

            <TabBar>
                <FileTab>文件(F)</FileTab>
                {tabs.map((name) => (
                    <Tab key={name} $active={name === tab} onClick={() => setTab(name)}>{name}</Tab>
                ))}
            </TabBar>

            <Ribbon>
                <Group width={134} label="操作" pad={5}>
                    <BigButton icon="start" label="启动" caret />
                    <BigButton icon="open" label="打开" />
                    <BigButton icon="saveBig" label="保存" />
                </Group>

                <Group width={258} label="显示" pad={7}>
                    <BigButton icon="undo" label="撤消" caret />
                    <BigButton icon="redo" label="重做" disabled />
                    <Pair $width={34}>
                        <Toggle $on aria-label="刀轨"><Icon name="hatch" /></Toggle>
                        <Toggle $on aria-label="循环"><Icon name="hatchLoop" /></Toggle>
                    </Pair>
                    <Pair $width={32}>
                        <Toggle aria-label="刀具"><Icon name="toolHolder" /></Toggle>
                        <Toggle aria-label="输出"><Icon name="pathDoc" /></Toggle>
                    </Pair>
                    <Pair $width={14}><CaretButton aria-label="选项"><Caret /></CaretButton></Pair>
                    <Triple $width={47} $center>
                        <SmallBox disabled aria-label="上"><Icon name="upArrow" /></SmallBox>
                        <SmallBox disabled aria-label="层"><Icon name="layersGrey" /></SmallBox>
                        <SmallBox disabled aria-label="下"><Icon name="downArrow" /></SmallBox>
                    </Triple>
                    <MoreButton icon="torch" />
                </Group>

                <Group width={68} label="IPW">
                    <BigButton icon="ipw" label="显示 IPW" width={68} disabled />
                </Group>

                <Group width={60}>
                    <BigButton icon="draft" label="拔模分析" width={60} caret />
                </Group>

                <Group width={202} label="同步建模" pad={12}>
                    <Triple $width={73}>
                        <Small icon="patch" label="修补开口" />
                        <Small icon="moveFace" label="移动面" />
                        <Small icon="wrap" label="包容体" />
                    </Triple>
                    <Triple $width={75}>
                        <Small icon="offset" label="偏置区域" />
                        <Small icon="replace" label="替换面" />
                        <Small icon="remove" label="删除面" />
                    </Triple>
                    <MoreButton icon="refresh" />
                </Group>

                <Group width={316} label="曲线" pad={12}>
                    <Pair $width={70}>
                        <Small icon="point" label="点" slot={24} caret />
                        <Small icon="line" label="生产线" slot={24} />
                    </Pair>
                    <Triple $width={120}>
                        <Small icon="arc" label="圆弧/圆" />
                        <Small icon="basic" label="基本曲线（原有）" />
                        <Small icon="spline" label="艺术样条" />
                    </Triple>
                    <Gallery>
                        <Small icon="helix" label="螺旋" />
                        <Small icon="textA" label="文本" />
                        <Small icon="surfCurve" label="曲面上的曲线" />
                    </Gallery>
                    <Triple $width={18} $center>
                        <SmallBox aria-label="上一行"><Caret dim /></SmallBox>
                        <SmallBox aria-label="下一行"><Caret /></SmallBox>
                        <SmallBox aria-label="展开"><Caret bar /></SmallBox>
                    </Triple>
                </Group>

                <Group width={297}>
                    <BigButton icon="showHide" label="显示和隐藏" width={72} caret />
                    <BigButton icon="layerSet" label="图层设置" width={44} caret />
                    <Creators>
                        <Small icon="newGeom" label="创建几何体" slot={24} />
                        <Small icon="newOp" label="创建工序" slot={24} />
                        <Small icon="newTool" label="创建刀具" slot={24} />
                        <Small icon="newProg" label="创建程序" slot={24} />
                    </Creators>
                </Group>

                <Group width={296} label="工序" pad={12}>
                    <Pair $width={81}>
                        <Small icon="verify" label="确认刀轨" slot={24} />
                        <Small icon="generate" label="生成刀轨" slot={24} />
                    </Pair>
                    <BigButton icon="gouge" label="过切检查" width={44} />
                </Group>
            </Ribbon>

            <SelectionBar>
                <MenuButton>
                    <Icon name="burger" />
                    <span>菜单(<u>M</u>)</span>
                    <Caret />
                </MenuButton>
                <Rule />
                <PickWrap $width={134}>
                    <Pick aria-label="过滤器" defaultValue="无选择过滤器"><option>无选择过滤器</option></Pick>
                    <Caret />
                </PickWrap>
                <PickWrap $width={140}>
                    <Pick aria-label="范围" defaultValue="整个装配"><option>整个装配</option></Pick>
                    <Caret />
                </PickWrap>
                <Tools items={toolItems} />
            </SelectionBar>

            <PartTabs>
                <PartTab><Icon name="millTab" />O9.prt<Icon name="edited" /></PartTab>
                <PartTab $active><Icon name="millTab" />O33.prt<Icon name="edited" /><Icon name="close" /></PartTab>
            </PartTabs>

            <Viewport>
                <Model />
                <Tooltip><Icon name="extrude" />拉伸(2)</Tooltip>
                <Triad width="70" height="62" viewBox="0 -6 70 62">
                    <path d="M11 6l27 1v36l-27 1z" fill="#d6d7d8" stroke="#b5b5b5" />
                    <path d="M11 23h27M11 26h27" stroke="#b5b5b5" />
                    <path d="M9 12v28M7 8l2 4 2-4" stroke="#2a9a2a" strokeWidth="2" fill="none" />
                    <path d="M11 42V16" stroke="#0a2ca0" strokeWidth="3" />
                    <path d="M11 6l4 12H8z" fill="#0a2ca0" />
                    <path d="M14 43h30" stroke="#c41f1f" strokeWidth="2" />
                    <path d="M42 40l13 3-13 4z" fill="#d92a2a" />
                    <circle cx="11" cy="43" r="4" fill="#d5d5d5" stroke="#8a8a8a" />
                    <AxisText x="8" y="9" fill="#1450ff">Z</AxisText>
                    <AxisText x="55" y="48" fill="#d92a2a">X</AxisText>
                </Triad>
                <Watermark>
                    <svg width="72" height="82" viewBox="0 0 72 82" aria-hidden="true">
                        <path d="M36 0L50 9Q57 20 56 39L36 22L34 19Q26 12 14 13z" fill="#cbe6f4" />
                        <path d="M50 8L71 20V38Q68 50 56 58V32Q57 18 50 8z" fill="#84cdf0" />
                        <path d="M71 40V61L59 68Q48 71 36 64L55 53Q66 50 71 40z" fill="#70bfe7" />
                        <path d="M58 69L36 82L24 75Q17 66 17 52L35 64Q46 70 58 69z" fill="#70c8f2" />
                        <path d="M22 74L0 61V60Q4 42 16 31V53Q16 66 22 74z" fill="#99d2ef" />
                        <path d="M0 57V20L13 13Q25 12 34 19L17 29Q5 39 0 57z" fill="#b2dcf2" />
                        <path d="M36 19L55 30V53L36 64L17 53V30z" fill="#e9eaec" />
                        <path d="M36 23L52 32L36 41L20 32z" fill="#b6def3" />
                        <path d="M20 33L36 42V60L20 51z" fill="#97cfed" />
                        <path d="M52 33L36 42V60L52 51z" fill="#72bee6" />
                    </svg>
                    <div>
                        <SiteName><b>3D</b>世界网</SiteName>
                        <SiteUrl>WWW.3DSJW.COM</SiteUrl>
                    </div>
                </Watermark>
            </Viewport>
        </Page>
    );
}

const GlobalStyle = createGlobalStyle`
    * {
        box-sizing: border-box;
    }
    body {
        margin: 0;
        font-family: "Noto Sans", "Noto Sans CJK SC", sans-serif;
        font-size: 11px;
        color: #1a1a1a;
        overflow: hidden;
    }
    button, select {
        font: inherit;
        color: inherit;
        background: none;
        border: none;
        padding: 0;
        white-space: nowrap;
    }
`;

const Page = styled.div`
    display: flex;
    flex-direction: column;
    min-height: 100vh;
    background: #f0f0f0;
`;

const Glyph = styled.svg`
    display: block;
    flex: none;
`;

const Rule = styled.span`
    width: 1px;
    height: 20px;
    background: #b5b5b5;
`;

const TitleBar = styled.header`
    display: flex;
    align-items: center;
    height: 26px;
`;

const Brand = styled.b`
    width: 38px;
    padding-left: 1px;
    font-family: "Noto Sans", sans-serif;
    font-size: 21px;
    line-height: 26px;
    color: #87a0b4;
`;

const QuickAccess = styled.nav`
    display: flex;
    align-items: center;
    margin-left: 7px;
`;

const WindowTitle = styled.span`
    margin-left: auto;
    margin-right: 376px;
    font-size: 13px;
    line-height: 24px;
    color: #000;
`;

const TabBar = styled.nav`
    display: flex;
    height: 30px;
    padding-top: 1px;
    background: #bdbdbd;
`;

const Tab = styled.button`
    padding: 0 16px 2px;
    font-size: 13px;
    color: ${({ $active }) => ($active ? "#00658a" : "#1f1f1f")};
    background: ${({ $active }) => ($active ? "#f0f0f0" : "transparent")};
`;

const FileTab = styled(Tab)`
    width: 78px;
    margin: -1px 5px 0 0;
    padding: 0 4px 2px 0;
    color: #fff;
    background: #559fb7;
`;

const Ribbon = styled.section`
    display: flex;
    height: 94px;
    border-bottom: 1px solid #b5b5b5;
    overflow: hidden;
`;

const GroupBox = styled.div`
    display: flex;
    flex-direction: column;
    flex: none;
    width: ${({ $width }) => $width}px;
`;

const GroupBody = styled.div`
    display: flex;
    align-items: flex-start;
    flex: 1;
    padding-left: ${({ $pad }) => $pad}px;
`;

const GroupFoot = styled.div`
    display: flex;
    align-items: center;
    height: 18px;
    padding: 0 7px 2px 0;
    color: #00658a;
`;

const GroupName = styled.span`
    flex: 1;
    padding-right: 4px;
    text-align: center;
`;

const Divider = styled.span`
    flex: none;
    width: 1px;
    margin: 5px 0 4px;
    background: #b5b5b5;
`;

const BigBox = styled.button`
    display: flex;
    flex-direction: column;
    align-items: center;
    flex: none;
    width: ${({ $width }) => $width}px;
    padding-top: 4px;
    line-height: 18px;
    color: ${({ disabled }) => (disabled ? "#9a9a9a" : "inherit")};

    svg:last-child {
        margin-top: 4px;
    }
`;

const BigArt = styled.span`
    display: flex;
    align-items: center;
    justify-content: center;
    height: 36px;

    && svg {
        margin: 0;
    }
`;

const MoreArt = styled(BigArt)`
    width: 38px;
    height: 35px;
    margin-bottom: 1px;
    border: 1px solid #b5b5b5;
    border-radius: 3px;
`;

const Pair = styled.div`
    display: grid;
    grid-template-rows: 30px 30px;
    row-gap: 4px;
    flex: none;
    width: ${({ $width }) => $width}px;
    padding-top: 6px;
`;

const Triple = styled.div`
    display: grid;
    grid-template-rows: repeat(3, 22px);
    justify-items: ${({ $center }) => ($center ? "center" : "start")};
    flex: none;
    width: ${({ $width }) => $width}px;
    padding-top: 2px;
`;

const Toggle = styled.button`
    display: flex;
    align-items: center;
    justify-content: center;
    justify-self: center;
    width: 31px;
    height: 30px;
    border: 1px solid ${({ $on }) => ($on ? "#a3d3dd" : "transparent")};
    background: ${({ $on }) => ($on ? "#cde6ec" : "transparent")};
`;

const CaretButton = styled.button`
    display: flex;
    align-items: center;
    justify-content: center;
`;

const SmallBox = styled.button`
    display: flex;
    align-items: center;
    gap: 4px;
`;

const Slot = styled.span`
    display: flex;
    justify-content: center;
    width: ${({ $width }) => $width}px;
`;

const CaretGap = styled.span`
    margin-left: 4px;
`;

const Gallery = styled.div`
    display: grid;
    grid-template-rows: repeat(3, 21px);
    flex: none;
    width: 93px;
    margin-top: 5px;
    padding-left: 2px;
    border: 1px solid #b5b5b5;
    background: #fbfbfb;
`;

const Creators = styled.div`
    display: grid;
    grid-template-columns: 92px 78px;
    grid-template-rows: 40px 40px;
    padding: 7px 0 0 10px;
`;

const SelectionBar = styled.section`
    display: flex;
    align-items: center;
    height: 28px;
    border-bottom: 1px solid #8a8a8a;
`;

const MenuButton = styled.button`
    display: flex;
    align-items: center;
    gap: 5px;
    width: 70px;
    margin: 0 8px 0 8px;
`;

const PickWrap = styled.span`
    display: grid;
    align-items: center;
    width: ${({ $width }) => $width}px;
    margin-left: ${({ $width }) => ($width === 134 ? 11 : 8)}px;

    & + button {
        margin-left: 6px;
    }
    > * {
        grid-area: 1 / 1;
    }
    > svg {
        justify-self: end;
        margin-right: 5px;
        pointer-events: none;
    }
`;

const Pick = styled.select`
    appearance: none;
    width: 100%;
    height: 22px;
    border: 1px solid #a3a3a3;
    border-radius: 0;
    background: #fff;
    color: #000;
`;

const Cell = styled.span`
    display: flex;
    justify-content: center;
    flex: none;
    width: ${({ $width }) => $width}px;
`;

const ToolButton = styled.button`
    display: flex;
    align-items: center;
    justify-content: center;
    flex: none;
    width: ${({ $width }) => $width}px;
    height: 22px;
    outline: ${({ $on }) => ($on ? "1px solid #a3d3dd" : "none")};
    outline-offset: -1px;
    background: ${({ $on }) => ($on ? "#cde6ec" : "transparent")};
`;

const PartTabs = styled.nav`
    display: flex;
    height: 23px;
    border-right: 1px solid #8a8a8a;
    border-bottom: 2px solid #559fb7;
`;

const PartTab = styled.button`
    display: flex;
    align-items: center;
    gap: 6px;
    min-width: 98px;
    padding: 0 6px 0 ${({ $active }) => ($active ? 4 : 1)}px;
    font-size: 12px;
    color: ${({ $active }) => ($active ? "#fff" : "#222")};
    background: ${({ $active }) => ($active ? "#559fb7" : "transparent")};
`;

const Viewport = styled.main`
    position: relative;
    flex: 1;
    border-right: 1px solid #8a8a8a;
    background: linear-gradient(#b4b5b6, #cfd0d1 40%, #e4e5e7 74%, #e7e8ea);
`;

const Scene = styled.svg`
    position: absolute;
    inset: 0;
    width: 100%;
    height: 100%;
`;

const AxisText = styled.text`
    font-family: "Liberation Sans", sans-serif;
    font-size: 13px;
`;

const Tooltip = styled.div`
    position: absolute;
    left: 684px;
    top: 523px;
    display: flex;
    align-items: center;
    gap: 3px;
    height: 21px;
    padding: 0 1px;
    font-size: 12px;
    color: #2b1715;
    background: #cbb3b1;
    border: 1px solid #8d7d7c;
    box-shadow: 2px 2px 2px rgba(0, 0, 0, 0.4);
`;

const Triad = styled.svg`
    position: absolute;
    left: 52px;
    bottom: 54px;
`;

const Watermark = styled.div`
    position: absolute;
    right: 24px;
    bottom: 13px;
    display: flex;
    align-items: center;
    gap: 8px;
    color: #f3f4f6;
`;

const SiteName = styled.div`
    display: flex;
    align-items: center;
    gap: 4px;
    height: 42px;
    font-family: "Noto Sans CJK SC", sans-serif;
    font-size: 38px;
    font-weight: 700;
    line-height: 38px;

    b {
        font-family: "Liberation Sans", sans-serif;
        font-size: 46px;
    }
`;

const SiteUrl = styled.div`
    margin-top: 3px;
    font-family: "DejaVu Sans", sans-serif;
    font-size: 17px;
    font-weight: 700;
    line-height: 18px;
`;
